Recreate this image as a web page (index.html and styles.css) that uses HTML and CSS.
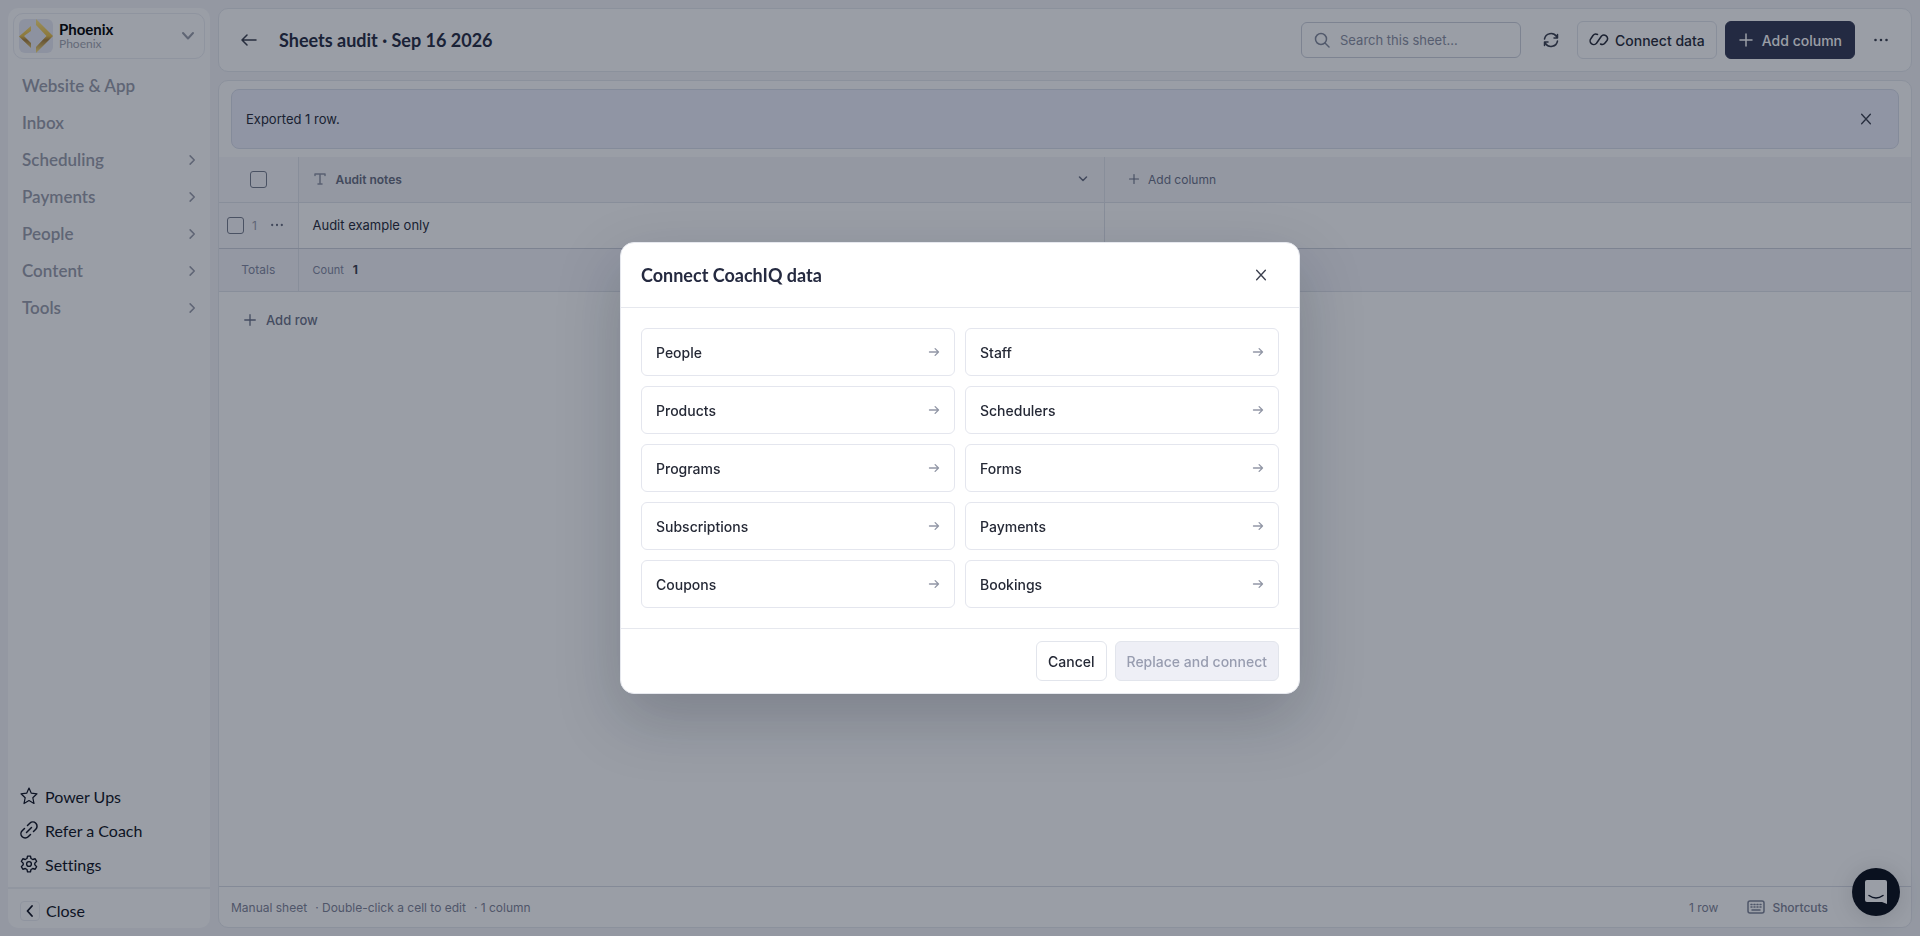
FILE: index.html
```
<!DOCTYPE html>
<html lang="en">
<head>
  <meta charset="utf-8">
  <title>Sheets audit</title>
  <link rel="stylesheet" href="styles.css">
</head>
<body>
  <!-- icons shared by the page -->
  <svg class="sprite" aria-hidden="true">
    <symbol id="chevron" viewBox="0 0 16 16"><path d="M5.5 2.5 11 8l-5.5 5.5"/></symbol>
    <symbol id="plus" viewBox="0 0 16 16"><path d="M8 2v12M2 8h12"/></symbol>
    <symbol id="close" viewBox="0 0 16 16"><path d="m3 2.5 10 11M13 2.5l-10 11"/></symbol>
    <symbol id="dots" viewBox="0 0 16 16"><path d="M2.5 8h.01M8 8h.01M13.5 8h.01"/></symbol>
    <symbol id="arrow" viewBox="0 0 16 16"><path d="M2 8h12M9.5 3.5 14 8l-4.5 4.5"/></symbol>
  </svg>

  <div class="app">
    <aside class="sidebar">
      <button class="account">
        <svg class="logo" viewBox="0 0 34 34">
          <defs>
            <linearGradient id="gold" x1="0" y1="0" x2="0" y2="1">
              <stop offset="0" stop-color="#ffe680"/>
              <stop offset=".5" stop-color="#e8c04a"/>
              <stop offset=".62" stop-color="#a8803a"/>
              <stop offset="1" stop-color="#ffe680"/>
            </linearGradient>
          </defs>
          <path fill="url(#gold)" d="M12 7v5l-7 5 7 7v5L0 17.5zM17 0l17 17-17 17v-6l10.5-11L17 6z"/>
        </svg>
        <span class="account-text">
          <strong>Phoenix</strong>
          <small>Phoenix</small>
        </span>
        <svg class="icon i14 account-arrow" viewBox="0 0 14 14"><path d="m2 4 5 5.5L12 4"/></svg>
      </button>
      <nav class="nav">
        <a href="#">Website &amp; App</a>
        <a href="#">Inbox</a>
        <a href="#">Scheduling <svg class="icon i12"><use href="#chevron"/></svg></a>
        <a href="#">Payments <svg class="icon i12"><use href="#chevron"/></svg></a>
        <a href="#">People <svg class="icon i12"><use href="#chevron"/></svg></a>
        <a href="#">Content <svg class="icon i12"><use href="#chevron"/></svg></a>
        <a href="#">Tools <svg class="icon i12"><use href="#chevron"/></svg></a>
      </nav>
      <nav class="nav-bottom">
        <a href="#"><svg class="icon i18 star" viewBox="0 0 18 18"><path d="m9 1 2.3 5.2 5.7.6-4.2 3.9 1.200 5.800L9 13.600l-5 2.900 1.200-5.800L1 6.800l5.700-.6z"/></svg>Power Ups</a>
        <a href="#"><svg class="icon i18" viewBox="0 0 18 18"><path d="m6.500 11.500 5-5M7.500 4.500l2.300-2.300a4.200 4.200 0 0 1 6 6l-2.300 2.300M10.500 13.500l-2.300 2.300a4.200 4.200 0 0 1-6-6l2.300-2.300"/></svg>Refer a Coach</a>
        <a href="#"><svg class="icon i18 gear" viewBox="1 0 22 24"><path d="M10 1.500h4l.7 3.200 2.300 1.300 3.200-1 2 3.500L19.700 11v2l2.500 2.500-2 3.500-3.200-1-2.300 1.300-.7 3.200h-4l-.7-3.200L7 18l-3.200 1-2-3.500L4.300 13v-2L1.800 8.500l2-3.500L7 6l2.300-1.300z"/><circle cx="12" cy="12" r="3.200"/></svg>Settings</a>
      </nav>
      <button class="collapse">
        <span class="collapse-icon"><svg class="icon i12" viewBox="0 0 12 12"><path d="M8 1 3.500 6 8 11"/></svg></span>Close
      </button>
    </aside>

    <main class="main">
      <header class="topbar">
        <button class="icon-btn" aria-label="Back"><svg class="icon i16" viewBox="0 0 16 16"><path d="M15 8H1M6 3 1 8l5 5"/></svg></button>
        <h1>Sheets audit · Sep 16 2026</h1>
        <label class="search">
          <svg class="icon i16" viewBox="0 0 16 16"><circle cx="7" cy="7" r="5.500"/><path d="m11 11 4 4"/></svg>
          <input type="search" placeholder="Search this sheet..." aria-label="Search this sheet">
        </label>
        <button class="icon-btn refresh" aria-label="Refresh"><svg class="icon i16" viewBox="0 0 16 16"><path d="M1.500 7a6.600 6.600 0 0 1 12-2.500l1 1.500M14.500 2.500V6H11M14.500 9a6.600 6.600 0 0 1-12 2.500l-1-1.500M1.500 13.500V10H5"/></svg></button>
        <button class="btn"><svg class="icon link-icon" viewBox="0 0 20 16"><path d="M8.500 2.500A3.600 3.600 0 0 0 4 3.500L2 6.500a3.600 3.600 0 0 0 5.500 4.700l5-7.200A3.600 3.600 0 0 1 18 8.500L16 11a3.600 3.600 0 0 1-4.500 1"/></svg>Connect data</button>
        <button class="btn primary"><svg class="icon i16"><use href="#plus"/></svg>Add column</button>
        <button class="icon-btn" aria-label="More"><svg class="icon dots i16"><use href="#dots"/></svg></button>
      </header>

      <section class="sheet">
        <div class="notice">
          <span>Exported 1 row.</span>
          <button class="icon-btn" aria-label="Dismiss"><svg class="icon i14"><use href="#close"/></svg></button>
        </div>

        <table class="grid">
          <thead>
            <tr>
              <th class="pick"><input type="checkbox" aria-label="Select all rows"></th>
              <th>
                <div class="cell-head">
                  <svg class="icon i14 type-icon" viewBox="0 0 14 14"><path d="M2 3.500V2h10v1.500M7 2v10M5 12h4"/></svg>
                  <span>Audit notes</span>
                  <svg class="icon i10" viewBox="0 0 10 10"><path d="m1.500 3 3.500 3.500L8.500 3"/></svg>
                </div>
              </th>
              <th class="add-col"><button class="text-btn"><svg class="icon i12"><use href="#plus"/></svg>Add column</button></th>
            </tr>
          </thead>
          <tbody>
            <tr>
              <td class="pick">
                <div class="row-tools">
                  <input type="checkbox" aria-label="Select row 1">
                  <span>1</span>
                  <button class="row-more" aria-label="Row actions"><svg class="icon dots i14"><use href="#dots"/></svg></button>
                </div>
              </td>
              <td>Audit example only</td>
              <td></td>
            </tr>
          </tbody>
          <tfoot>
            <tr>
              <td class="pick">Totals</td>
              <td class="total">Count <b>1</b></td>
              <td></td>
            </tr>
          </tfoot>
        </table>
        <button class="text-btn add-row"><svg class="icon i14"><use href="#plus"/></svg>Add row</button>

        <footer class="status">
          <span>Manual sheet</span>
          <span>· Double-click a cell to edit</span>
          <span>· 1 column</span>
          <span class="row-count">1 row</span>
          <button class="shortcuts"><svg class="icon kbd" viewBox="0 0 18 14"><rect x="1" y="1" width="16" height="12" rx="2"/><path d="M4 4.500h1M7 4.500h1M10 4.500h1M13 4.500h1M4 7h1M7 7h1M10 7h1M13 7h1M5 10h8"/></svg>Shortcuts</button>
        </footer>
      </section>
    </main>
  </div>

  <button class="chat" aria-label="Open chat">
    <svg viewBox="0 0 22 24"><path fill="#fff" d="M2 0h18a2 2 0 0 1 2 2v22l-5-2H2a2 2 0 0 1-2-2V2a2 2 0 0 1 2-2z"/><path fill="none" stroke="#0a1020" stroke-width="1.500" stroke-linecap="round" d="M4 15.500q7 5 14 0"/></svg>
  </button>

  <div class="overlay">
    <div class="modal" role="dialog" aria-modal="true" aria-labelledby="modal-title">
      <div class="modal-head">
        <h2 id="modal-title">Connect CoachIQ data</h2>
        <button class="icon-btn" aria-label="Close"><svg class="icon i14"><use href="#close"/></svg></button>
      </div>
      <div class="sources">
        <button>People <svg class="icon i12"><use href="#arrow"/></svg></button>
        <button>Staff <svg class="icon i12"><use href="#arrow"/></svg></button>
        <button>Products <svg class="icon i12"><use href="#arrow"/></svg></button>
        <button>Schedulers <svg class="icon i12"><use href="#arrow"/></svg></button>
        <button>Programs <svg class="icon i12"><use href="#arrow"/></svg></button>
        <button>Forms <svg class="icon i12"><use href="#arrow"/></svg></button>
        <button>Subscriptions <svg class="icon i12"><use href="#arrow"/></svg></button>
        <button>Payments <svg class="icon i12"><use href="#arrow"/></svg></button>
        <button>Coupons <svg class="icon i12"><use href="#arrow"/></svg></button>
        <button>Bookings <svg class="icon i12"><use href="#arrow"/></svg></button>
      </div>
      <div class="modal-foot">
        <button class="btn">Cancel</button>
        <button class="btn" disabled>Replace and connect</button>
      </div>
    </div>
  </div>
</body>
</html>
```
FILE: styles.css
```
* {
  box-sizing: border-box;
}

body {
  margin: 0;
  background: #f4f5f8;
  color: #252936;
  font-family: Inter, sans-serif;
  font-size: 14px;
}

button {
  padding: 0;
  border: 0;
  background: none;
  color: inherit;
  font: inherit;
}

a {
  color: inherit;
  text-decoration: none;
}

.sprite {
  display: none;
}

/* icons */
.icon {
  flex: none;
  fill: none;
  stroke: currentColor;
  stroke-width: 1.5;
  stroke-linecap: round;
  stroke-linejoin: round;
}

.i10 { width: 10px; height: 10px; }
.i12 { width: 12px; height: 12px; }
.i14 { width: 14px; height: 14px; }
.i16 { width: 16px; height: 16px; }
.i18 { width: 18px; height: 18px; }

.dots {
  stroke-width: 2.6;
}

.star {
  stroke-width: 1.2;
}

.gear {
  stroke-width: 1.8;
}

.app {
  display: flex;
  gap: 8px;
  height: 100vh;
  padding: 8px;
}

/* sidebar */
.sidebar {
  display: flex;
  flex-direction: column;
  width: 202px;
  background: #fff;
  border-radius: 10px;
  font-family: Lato, sans-serif;
  font-variant-ligatures: none;
}

.account {
  display: flex;
  align-items: center;
  gap: 6px;
  height: 46px;
  margin: 5px 5px 8px;
  padding: 0 9px 0 5px;
  border: 1px solid #eceef3;
  border-radius: 10px;
  text-align: left;
}

.logo {
  width: 34px;
  height: 34px;
  background: #e9ebf5;
  border-radius: 6px;
}

.account-text {
  flex: 1;
}

.account-text strong,
.account-text small {
  display: block;
}

.account-text strong {
  color: #000;
  font-size: 15px;
  line-height: 16px;
}

.account-text small {
  color: #a3a6b1;
  font-size: 12px;
  line-height: 14px;
}

.account-arrow {
  color: #9a9eaa;
  stroke-width: 2;
}

.nav {
  flex: 1;
  color: #9a9dab;
  font-size: 17px;
  font-weight: 600;
}

.nav a {
  display: flex;
  align-items: center;
  justify-content: space-between;
  height: 37px;
  padding: 0 12px 0 14px;
}

.nav .icon {
  stroke-width: 2;
}

.nav-bottom {
  padding-bottom: 6px;
  color: #0d1120;
  font-size: 16px;
}

.nav-bottom a {
  display: flex;
  align-items: center;
  gap: 7px;
  height: 34px;
  padding-left: 12px;
}

.collapse {
  display: flex;
  align-items: center;
  gap: 6px;
  height: 41px;
  padding: 4px 12px 0;
  border-top: 2px solid #f0f1f5;
  color: #0d1120;
  font-size: 16px;
}

.collapse-icon {
  display: flex;
  align-items: center;
  justify-content: center;
  width: 20px;
  height: 20px;
  border: 1px solid #eceef3;
  border-radius: 4px;
}

.collapse .icon {
  stroke-width: 1.8;
}

/* main column */
.main {
  display: flex;
  flex: 1;
  flex-direction: column;
  gap: 8px;
}

.topbar,
.sheet {
  background: #fff;
  border: 1px solid #e6e8ee;
  border-radius: 10px;
}

.topbar {
  display: flex;
  align-items: center;
  height: 64px;
  padding: 0 11px;
}

h1,
h2 {
  flex: 1;
  margin: 0;
  color: #252a40;
  font-family: Lato, sans-serif;
  font-size: 18px;
  font-weight: 700;
}

h1 {
  margin-left: 11px;
}

.icon-btn {
  display: flex;
  align-items: center;
  justify-content: center;
  width: 38px;
  height: 38px;
  color: #3a3e4d;
}

.search {
  display: flex;
  align-items: center;
  gap: 10px;
  width: 220px;
  height: 36px;
  padding: 0 12px;
  border: 1px solid #cdd1db;
  border-radius: 6px;
  color: #848a9c;
}

.search input {
  width: 100%;
  padding: 0;
  border: 0;
  outline: 0;
  background: none;
  font: inherit;
  font-size: 13px;
}

.search input::placeholder {
  color: #8b90a2;
}

.refresh {
  margin: 0 7px 0 11px;
}

.btn {
  display: flex;
  align-items: center;
  gap: 6px;
  height: 38px;
  padding: 0 11px;
  border: 1px solid #e2e5ec;
  border-radius: 6px;
  font-weight: 500;
}

.link-icon {
  width: 20px;
  height: 16px;
}

.btn.primary {
  margin: 0 7px 0 8px;
  gap: 8px;
  padding: 0 12px;
  border-color: #333853;
  background: #333853;
  color: #fff;
}

/* sheet */
.sheet {
  display: flex;
  flex: 1;
  flex-direction: column;
  overflow: hidden;
}

.notice {
  display: flex;
  align-items: center;
  justify-content: space-between;
  height: 60px;
  margin: 8px 12px;
  padding: 0 13px 0 14px;
  border: 1px solid #dadeeb;
  border-radius: 8px;
  background: #eef0fb;
  font-size: 13px;
}

.grid {
  width: 100%;
  border-collapse: collapse;
  table-layout: fixed;
}

.grid th,
.grid td {
  height: 46px;
  padding: 0 14px;
  border-right: 1px solid #e0e3ea;
  border-bottom: 1px solid #e0e3ea;
  text-align: left;
}

.grid th:last-child,
.grid td:last-child {
  border-right: 0;
}

.grid th {
  height: 45px;
  background: #f4f5f8;
  color: #686d80;
  font-size: 12px;
  font-weight: 600;
}

.grid td {
  font-size: 13px;
}

.grid .pick {
  width: 79px;
  padding: 0;
  background: #f8f9fb;
  text-align: center;
}

.grid tbody td {
  border-bottom: 1px solid #cdd1db;
}

.grid tfoot td,
.grid tfoot .pick {
  height: 43px;
  background: #f4f5fa;
  color: #8388a0;
  font-size: 12px;
}

.grid tfoot .total {
  border-right: 0;
  font-size: 11px;
}

.grid tfoot b {
  margin-left: 6px;
  color: #3a3e4d;
  font-size: 12px;
}

input[type="checkbox"] {
  flex: none;
  width: 17px;
  height: 17px;
  margin: 0;
  border: 1px solid #767c8c;
  border-radius: 3px;
  appearance: none;
  vertical-align: middle;
}

.cell-head {
  display: flex;
  align-items: center;
  gap: 9px;
  padding-right: 2px;
}

.cell-head span {
  flex: 1;
}

.type-icon {
  color: #9095a5;
}

.row-tools {
  display: flex;
  align-items: center;
  gap: 8px;
  padding-left: 8px;
  color: #9a9eae;
  font-size: 12px;
}

.row-more {
  display: flex;
  margin-left: 5px;
  color: #686d80;
}

.grid .add-col {
  padding-left: 23px;
}

.text-btn {
  display: flex;
  align-items: center;
  gap: 8px;
  color: #6c7288;
  font-weight: 400;
}

.add-row {
  align-self: flex-start;
  height: 36px;
  margin: 10px 24px;
  gap: 9px;
  font-size: 13px;
  font-weight: 500;
}

.status {
  display: flex;
  align-items: center;
  gap: 8px;
  height: 41px;
  margin-top: auto;
  padding: 0 83px 0 12px;
  border-top: 1px solid #dadde6;
  color: #7f8497;
  font-size: 12px;
}

.row-count {
  margin-left: auto;
}

.shortcuts {
  display: flex;
  align-items: center;
  gap: 7px;
  margin-left: 21px;
  font-weight: 500;
}

.kbd {
  width: 18px;
  height: 14px;
}

.chat {
  position: fixed;
  right: 20px;
  bottom: 20px;
  display: flex;
  align-items: center;
  justify-content: center;
  width: 48px;
  height: 48px;
  border-radius: 50%;
  background: #080d18;
  box-shadow: 0 2px 24px rgba(0, 0, 0, 0.15);
}

.chat svg {
  width: 22px;
  height: 24px;
}

/* dialog */
.overlay {
  position: fixed;
  inset: 0;
  display: flex;
  align-items: center;
  justify-content: center;
  background: rgba(15, 23, 42, 0.42);
}

.modal {
  width: 680px;
  border: 1px solid #e6e8ee;
  border-radius: 14px;
  background: #fff;
  box-shadow: 0 24px 64px rgba(15, 23, 42, 0.22);
}

.modal-head {
  display: flex;
  align-items: center;
  height: 65px;
  padding: 0 19px 0 20px;
  border-bottom: 1px solid #e6e8ee;
}

.sources {
  display: grid;
  grid-template-columns: 1fr 1fr;
  gap: 10px;
  padding: 20px;
}

.sources button {
  display: flex;
  align-items: center;
  justify-content: space-between;
  height: 48px;
  padding: 0 14px;
  border: 1px solid #e4e6ee;
  border-radius: 6px;
  font-weight: 500;
}

.sources .icon {
  color: #9297a6;
  stroke-width: 1.8;
}

.modal-foot {
  display: flex;
  justify-content: flex-end;
  gap: 8px;
  padding: 12px 20px;
  border-top: 1px solid #e6e8ee;
}

.modal-foot .btn {
  height: 40px;
}

.btn:disabled {
  background: #eeeff6;
  color: #989db0;
}
```
